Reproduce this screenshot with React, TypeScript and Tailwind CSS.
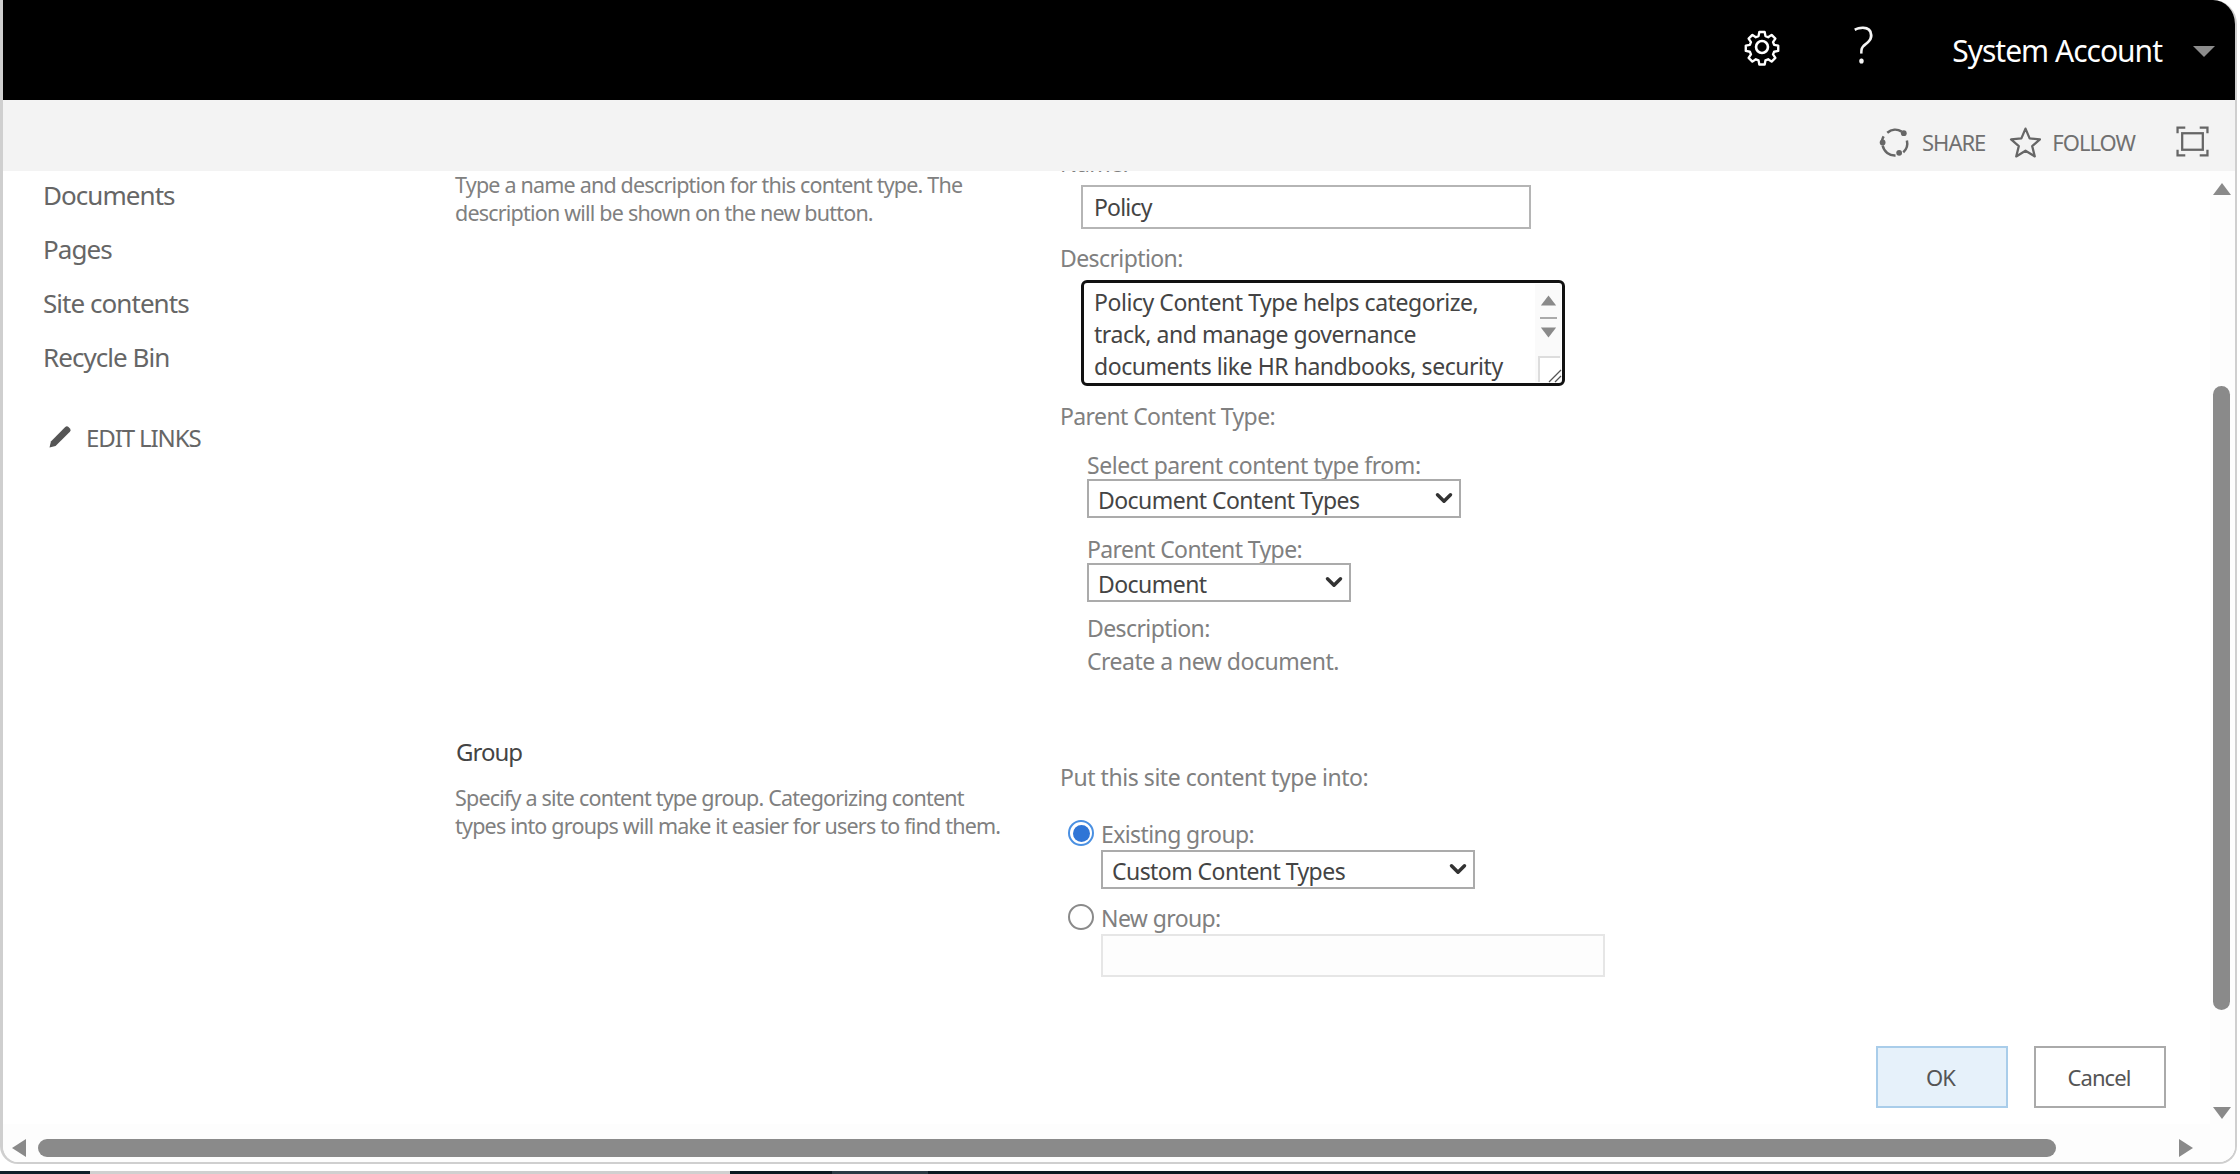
import { ChevronDown } from "lucide-react";

const font = "font-['Noto_Sans',sans-serif]";

const Select = ({ value, width }: { value: string; width: string }) => {
  return (
    <div className={`relative h-[39px] ${width}`}>
      <select className="w-full h-full appearance-none border-2 border-[#ababab] bg-white pl-[9px] pt-[2px] text-[23px] tracking-[-0.55px] text-[#444]">
        <option>{value}</option>
      </select>
      <ChevronDown
        className="absolute right-[4px] top-[6px] w-[26px] h-[26px] text-[#333] pointer-events-none"
        strokeWidth={3.2}
      />
    </div>
  );
};

const Radio = ({ checked }: { checked?: boolean }) => {
  return (
    <span
      className={`flex items-center justify-center w-[26px] h-[26px] rounded-full border-2 bg-white ${
        checked ? "border-[#4a90e2]" : "border-[#8a8a8a]"
      }`}
    >
      {checked && <span className="w-[17px] h-[17px] rounded-full bg-[#2f75d6]" />}
    </span>
  );
};

const Arrow = ({ points, className }: { points: string; className: string }) => {
  return (
    <svg viewBox="0 0 20 20" className={className}>
      <polygon points={points} fill="#8a8a8a" />
    </svg>
  );
};

const App = () => {
  return (
    <div className={`${font} w-[2240px] h-[1174px] overflow-hidden bg-white flex flex-col`}>
      <div className="h-[1164px] w-[2237px] flex flex-col border-l-[3px] border-r-[2px] border-b-[2px] border-[#cfcfcf] rounded-br-[18px] rounded-bl-[18px] rounded-tr-[24px] overflow-hidden">
        {/* suite bar */}
        <div className="h-[100px] shrink-0 bg-black flex items-center justify-end text-white pt-[2px]">
          <svg viewBox="0 0 24 24" className="w-[42px] h-[42px] mr-[70px] -mt-[9px]" fill="none" stroke="#fff" strokeWidth="1.5" strokeLinejoin="round">
            <path d="M10.3 2.5h3.4l.5 2.6 1.7.7 2.2-1.5 2.4 2.4-1.5 2.2.7 1.7 2.6.5v3.4l-2.6.5-.7 1.7 1.5 2.2-2.4 2.4-2.2-1.5-1.7.7-.5 2.6h-3.4l-.5-2.6-1.7-.7-2.2 1.5-2.4-2.4 1.5-2.2-.7-1.7-2.6-.5v-3.4l2.6-.5.7-1.7-1.5-2.2 2.4-2.4 2.2 1.5 1.7-.7z" transform="translate(1.2 1.2) scale(.9)" />
            <circle cx="12" cy="12" r="3.4" />
          </svg>
          <span className="text-[50px] font-light leading-none mr-[78px] -mt-[14px] text-[#f5f5f5]">?</span>
          <span className="text-[30px] leading-none tracking-[-1px]">System Account</span>
          <svg viewBox="0 0 20 10" className="w-[22px] h-[11px] ml-[31px] mr-[20px]">
            <polygon points="0,0 20,0 10,10" fill="#8c8c8c" />
          </svg>
        </div>

        {/* ribbon */}
        <div className="h-[71px] shrink-0 bg-[#f3f3f3] flex items-center justify-end pt-[14px] text-[#707070] text-[22px] tracking-[-1px]">
          <svg viewBox="0 0 30 30" className="w-[31px] h-[31px] mr-[12px]" fill="none" stroke="#666" strokeWidth="2.4">
            <path d="M8 5.5A12 12 0 0 1 22 4.5M27 13a12 12 0 0 1-3.5 11.5M16 27.5A12 12 0 0 1 3.5 18M3 13a12 12 0 0 1 1.5-4" />
            <circle cx="24" cy="6" r="2.8" fill="#666" stroke="none" />
            <circle cx="19.5" cy="25" r="2.8" fill="#666" stroke="none" />
            <circle cx="3.5" cy="15" r="2.8" fill="#666" stroke="none" />
          </svg>
          <span>SHARE</span>
          <svg viewBox="0 0 32 32" className="w-[33px] h-[33px] ml-[24px] mr-[10px]" fill="none" stroke="#666" strokeWidth="2.2" strokeLinejoin="round">
            <polygon points="16,2.5 20,12 30,13 22.5,19.5 25,29.5 16,24 7,29.5 9.5,19.5 2,13 12,12" />
          </svg>
          <span>FOLLOW</span>
          <svg viewBox="0 0 32 30" className="w-[33px] h-[31px] ml-[41px] mr-[26px] -mt-[3px]" fill="none" stroke="#666" strokeWidth="2.2">
            <path d="M9 1.5H1.5V7M23 1.5h7.5V7M9 28.5H1.5V23M23 28.5h7.5V23" />
            <rect x="6" y="7" width="20" height="16" />
          </svg>
        </div>

        {/* content */}
        <div className="flex-1 min-h-0 flex overflow-hidden">
          <div className="flex-1 min-w-0 flex flex-col">
            <div className="flex-1 min-h-0 flex overflow-hidden">
              {/* quick launch */}
              <nav className="w-[452px] shrink-0 pl-[40px] -mt-[3px] text-[26px] tracking-[-0.95px] text-[#666] leading-[54px]">
                <div>Documents</div>
                <div>Pages</div>
                <div>Site contents</div>
                <div>Recycle Bin</div>
                <div className="flex items-center mt-[27px] text-[24px] tracking-[-1.1px]">
                  <svg viewBox="0 0 24 24" className="w-[28px] h-[28px] ml-[3px] mr-[12px] -mt-[2px]" fill="#555">
                    <path d="M3 21l1.2-5.2L16.5 3.5a2 2 0 0 1 2.8 0l1.2 1.2a2 2 0 0 1 0 2.8L8.2 19.8z" />
                  </svg>
                  <span>EDIT LINKS</span>
                </div>
              </nav>

              {/* form sections */}
              <div className="w-[605px] shrink-0 text-[21.5px] tracking-[-0.8px] leading-[28px] text-[#808080]">
                <p className="w-[530px]">
                  Type a name and description for this content type. The description will be shown on the new button.
                </p>
                <h3 className="mt-[509px] ml-[1px] text-[24px] tracking-[-1px] leading-[32px] text-[#444]">Group</h3>
                <p className="w-[550px] mt-[16px]">
                  Specify a site content type group. Categorizing content types into groups will make it easier for users to find them.
                </p>
              </div>

              <div className="flex-1 min-w-0 text-[23px] tracking-[-0.6px] leading-[30px] text-[#808080] -mt-[23px]">
                <div className="h-[30px]">Name:</div>
                <input
                  readOnly
                  value="Policy"
                  className="block ml-[21px] mt-[7px] w-[450px] h-[44px] border-2 border-[#b5b5b5] pl-[11px] text-[#444] bg-white tracking-[-0.8px]"
                />
                <div className="mt-[14px]">Description:</div>
                <div className="ml-[21px] mt-[7px] w-[484px] h-[106px] relative">
                  <textarea
                    readOnly
                    value={"Policy Content Type helps categorize,\ntrack, and manage governance\ndocuments like HR handbooks, security"}
                    className="w-full h-full block resize-none overflow-hidden rounded-[6px] border-[3px] border-[#111] pl-[10px] pt-[3px] leading-[32px] tracking-[-0.45px] text-[#444] bg-white outline-none"
                  />
                  <div className="absolute right-[4px] top-[4px] bottom-[4px] w-[26px] bg-[#fafafa] flex flex-col items-center pt-[8px]">
                    <Arrow points="1,16 19,16 10,4" className="w-[17px] h-[17px] shrink-0" />
                    <div className="w-[17px] h-[2px] bg-[#aaa] mt-[8px] shrink-0" />
                    <Arrow points="1,4 19,4 10,16" className="w-[17px] h-[17px] mt-[5px] shrink-0" />
                    <div className="w-[22px] flex-1 mt-[15px] border-l-2 border-t-2 border-[#ddd] bg-white ml-[2px]" />
                  </div>
                  <svg viewBox="0 0 14 14" className="absolute right-[3px] bottom-[3px] w-[14px] h-[14px]" stroke="#555" strokeWidth="1.3">
                    <path d="M1 13L13 1M7 13l6-6" />
                  </svg>
                </div>
                <div className="mt-[15px]">Parent Content Type:</div>
                <div className="ml-[27px]">
                  <div className="mt-[20px] leading-[28px] tracking-[-0.45px]">Select parent content type from:</div>
                  <Select value="Document Content Types" width="w-[374px]" />
                  <div className="mt-[17px] leading-[28px]">Parent Content Type:</div>
                  <Select value="Document" width="w-[264px]" />
                  <div className="mt-[12px] leading-[28px]">Description:</div>
                  <div className="mt-[5px] leading-[28px] tracking-[-0.5px]">Create a new document.</div>
                </div>
                <div className="mt-[86px] leading-[32px] tracking-[-0.45px]">Put this site content type into:</div>
                <div className="mt-[27px] ml-[8px] flex items-start gap-[7px]">
                  <Radio checked />
                  <div className="leading-[28px]">Existing group:</div>
                </div>
                <div className="ml-[41px] mt-[2px]">
                  <Select value="Custom Content Types" width="w-[374px]" />
                </div>
                <div className="mt-[15px] ml-[8px] flex items-start gap-[7px]">
                  <Radio />
                  <div className="leading-[28px]">New group:</div>
                </div>
                <div className="ml-[41px] mt-[2px] w-[504px] h-[43px] border-2 border-[#e6e6e6] bg-[#fdfdfd]" />
                <div className="mt-[69px] ml-[816px] flex gap-[26px] text-[22px] tracking-[-0.9px] text-[#555]">
                  <button className="w-[132px] h-[62px] border-2 border-[#a9cdea] bg-[#e6f1fa] pr-[3px]">OK</button>
                  <button className="w-[132px] h-[62px] border-2 border-[#aaaaaa] bg-white pr-[2px]">Cancel</button>
                </div>
              </div>
            </div>

            {/* horizontal scrollbar */}
            <div className="h-[38px] shrink-0 flex items-center pt-[10px] bg-[#fdfdfd]">
              <Arrow points="16,1 16,19 2,10" className="w-[20px] h-[20px] ml-[7px]" />
              <div className="w-[2018px] h-[18px] ml-[8px] rounded-full bg-[#8a8a8a]" />
              <Arrow points="2,1 2,19 16,10" className="w-[20px] h-[20px] ml-[121px]" />
            </div>
          </div>

          {/* vertical scrollbar */}
          <div className="w-[25px] shrink-0 flex flex-col items-center pt-[8px] pr-[2px] bg-[#fdfdfd]">
            <Arrow points="1,16 19,16 10,4" className="w-[20px] h-[20px]" />
            <div className="w-[17px] h-[624px] mt-[187px] rounded-full bg-[#8a8a8a]" />
            <Arrow points="1,4 19,4 10,16" className="w-[20px] h-[20px] mt-[93px]" />
          </div>
        </div>
      </div>

      {/* taskbar sliver */}
      <div className="mt-[7px] h-[3px] flex">
        <div className="w-[90px] bg-[#10202b]" />
        <div className="w-[640px] bg-[#d0d0d0]" />
        <div className="w-[102px] bg-[#0c1a22]" />
        <div className="w-[96px] bg-[#2a3a44]" />
        <div className="flex-1 bg-[#0c1a22]" />
      </div>
    </div>
  );
};

export default App;
